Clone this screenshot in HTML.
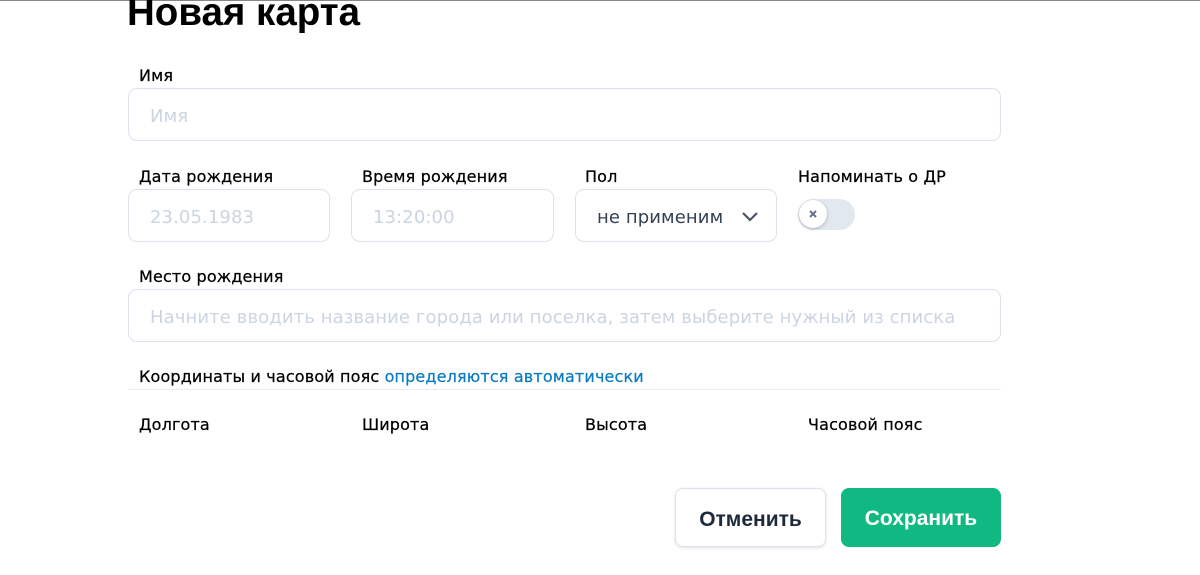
<!DOCTYPE html>
<html><head><meta charset="utf-8"><style>
*{box-sizing:border-box;margin:0;padding:0}
body{width:1200px;height:575px;background:#fff;font-family:"Liberation Sans","DejaVu Sans",sans-serif;position:relative;overflow:hidden}
.a{position:absolute}
.lbl{position:absolute;font-family:"DejaVu Sans",sans-serif;font-size:16px;color:#000;line-height:20px;letter-spacing:0.15px;white-space:nowrap;-webkit-text-stroke:0.25px #000}
.inp{position:absolute;border:1px solid #dbe2ec;border-radius:9px;height:53px;font-family:"DejaVu Sans",sans-serif;font-size:18px;letter-spacing:0.1px;color:#cbd5e1;padding-left:21px;line-height:55px;white-space:nowrap;overflow:hidden}
.btn{position:absolute;top:488px;height:59px;border-radius:8px;font-size:21px;font-weight:bold;text-align:center;line-height:61px}
</style></head><body>
<div class="a" style="left:0;top:0;width:1200px;height:1px;background:#888"></div>
<div class="a" style="left:127px;top:-10px;font-size:38.5px;font-weight:bold;color:#000;line-height:46px">Новая карта</div>
<div class="lbl" style="left:139px;top:66px">Имя</div>
<div class="inp" style="left:128px;top:88px;width:873px">Имя</div>
<div class="lbl" style="left:139px;top:167px">Дата рождения</div>
<div class="lbl" style="left:362px;top:167px">Время рождения</div>
<div class="lbl" style="left:585px;top:167px">Пол</div>
<div class="lbl" style="left:798px;top:167px">Напоминать о ДР</div>
<div class="inp" style="left:128px;top:189px;width:202px">23.05.1983</div>
<div class="inp" style="left:351px;top:189px;width:203px">13:20:00</div>
<div class="inp" style="left:575px;top:189px;width:202px;color:#334155">не применим
<svg class="a" style="left:165px;top:21px" width="18" height="12" viewBox="0 0 18 12"><path d="M2 2l7 7 7-7" fill="none" stroke="#475569" stroke-width="2.2"/></svg></div>
<div class="a" style="left:798px;top:199px;width:57px;height:31px;border-radius:16px;background:#e2e8f0"></div>
<div class="a" style="left:799px;top:200px;width:28px;height:28px;border-radius:50%;background:#fff;box-shadow:0 1px 3px rgba(0,0,0,.25)"></div>
<svg class="a" style="left:809px;top:210px" width="8" height="8" viewBox="0 0 8 8"><path d="M1 1l6 6M7 1l-6 6" stroke="#64748b" stroke-width="2"/></svg>
<div class="lbl" style="left:139px;top:267px">Место рождения</div>
<div class="inp" style="left:128px;top:289px;width:873px">Начните вводить название города или поселка, затем выберите нужный из списка</div>
<div class="lbl" style="left:139px;top:367px">Координаты и часовой пояс <span style="color:#0a7bc2;-webkit-text-stroke:0.25px #0a7bc2">определяются автоматически</span></div>
<div class="a" style="left:128px;top:389px;width:873px;height:1px;background:#e8edf3"></div>
<div class="lbl" style="left:139px;top:415px">Долгота</div>
<div class="lbl" style="left:362px;top:415px">Широта</div>
<div class="lbl" style="left:585px;top:415px">Высота</div>
<div class="lbl" style="left:808px;top:415px">Часовой пояс</div>
<div class="btn" style="left:675px;width:151px;border:1px solid #dbe2ec;color:#1e293b;box-shadow:0 1px 3px rgba(0,0,0,.12)">Отменить</div>
<div class="btn" style="left:841px;width:160px;background:#10b981;color:#fff">Сохранить</div>
</body></html>
